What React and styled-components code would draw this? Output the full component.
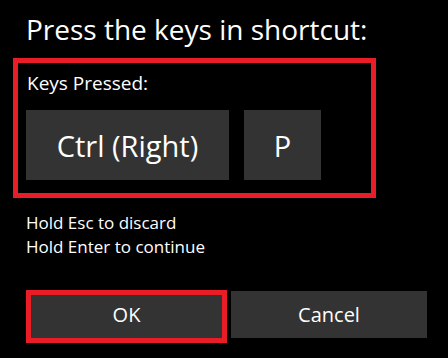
import React from "react";
import styled, { createGlobalStyle } from "styled-components";

const GlobalStyle = createGlobalStyle`
  html, body {
    margin: 0;
    padding: 0;
    background: #000;
  }
  body {
    font-family: "Open Sans", "Noto Sans", sans-serif;
    color: #fff;
  }
`;

const Dialog = styled.main`
  width: 448px;
  height: 358px;
  box-sizing: border-box;
  padding: 11px 0 0 13px;
  background: #000;
  display: flex;
  flex-direction: column;
  align-items: flex-start;
  overflow: hidden;
`;

const Title = styled.h1`
  margin: 0;
  padding-left: 13px;
  font-size: 28px;
  font-weight: 400;
  line-height: 36px;
  white-space: nowrap;
`;

const Focus = "#e81d25";

const PressedBox = styled.section`
  margin-top: 11px;
  width: 363px;
  height: 140px;
  box-sizing: border-box;
  border: 5px solid ${Focus};
  padding: 8px 0 0 8px;
  display: flex;
  flex-direction: column;
`;

const Label = styled.div`
  font-size: 19px;
  line-height: 24px;
  padding-left: 1px;
`;

const KeyRow = styled.div`
  margin-top: 15px;
  display: flex;
  gap: 15px;
`;

const Key = styled.div`
  width: ${(p) => p.$w}px;
  height: 70px;
  background: #333333;
  display: flex;
  align-items: center;
  justify-content: center;
  font-size: 29px;
  white-space: nowrap;
`;

const Hints = styled.div`
  margin-top: 13px;
  padding-left: 13px;
  font-size: 17px;
  line-height: 24px;
`;

const Buttons = styled.div`
  margin-top: 31px;
  margin-left: 13px;
  display: flex;
  align-items: flex-start;
  gap: 4px;
`;

const Button = styled.button`
  box-sizing: border-box;
  width: ${(p) => (p.$focused ? 201 : 196)}px;
  height: ${(p) => (p.$focused ? 53 : 47)}px;
  margin-top: ${(p) => (p.$focused ? 0 : 1)}px;
  border: ${(p) => (p.$focused ? `5px solid ${Focus}` : "none")};
  padding: ${(p) => (p.$focused ? "0 0 5px" : "0")};
  background: #333333;
  color: #fff;
  font-family: "Open Sans", "Noto Sans", sans-serif;
  font-size: 20px;
  display: flex;
  align-items: center;
  justify-content: center;
  cursor: pointer;
`;

export default function App() {
  const keys = [
    { label: "Ctrl (Right)", w: 203 },
    { label: "P", w: 77 },
  ];
  return (
    <>
      <GlobalStyle />
      <Dialog>
        <Title>Press the keys in shortcut:</Title>
        <PressedBox>
          <Label>Keys Pressed:</Label>
          <KeyRow>
            {keys.map((k) => (
              <Key key={k.label} $w={k.w}>
                {k.label}
              </Key>
            ))}
          </KeyRow>
        </PressedBox>
        <Hints>
          <div>Hold Esc to discard</div>
          <div>Hold Enter to continue</div>
        </Hints>
        <Buttons>
          <Button $focused>OK</Button>
          <Button>Cancel</Button>
        </Buttons>
      </Dialog>
    </>
  );
}
